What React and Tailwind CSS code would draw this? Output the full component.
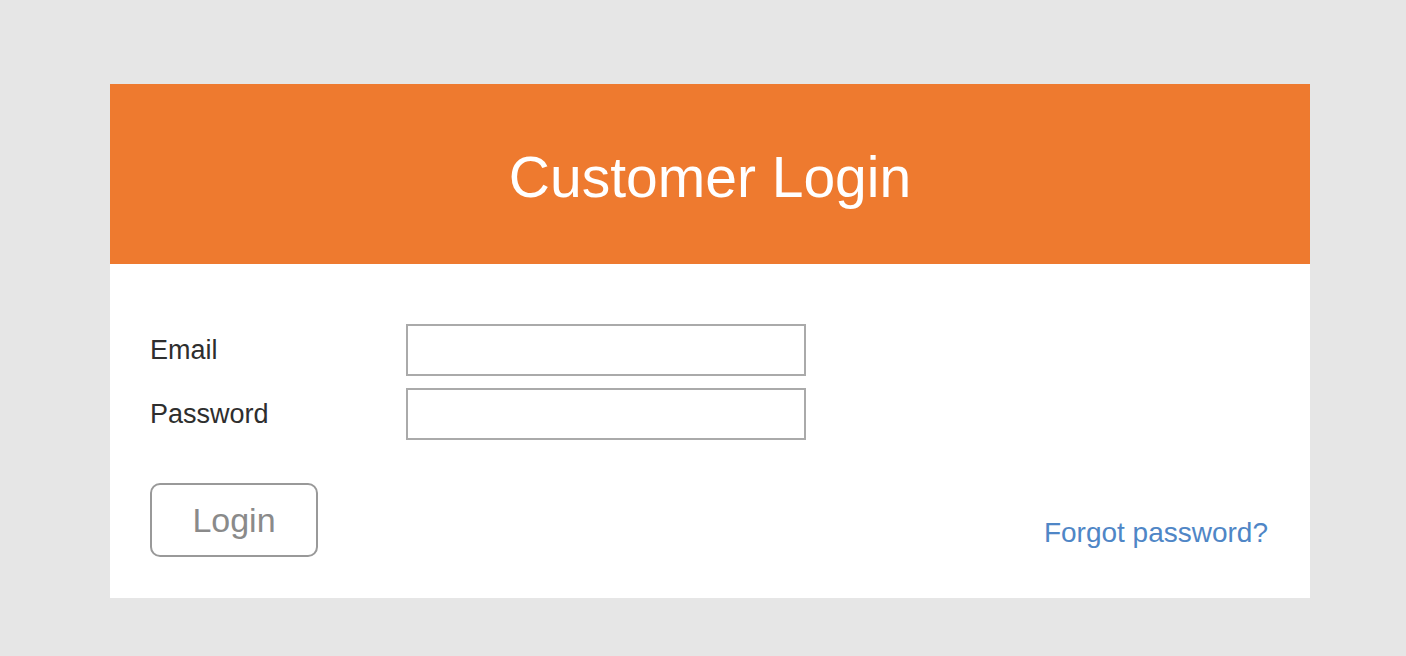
export default function App() {
  const font = { fontFamily: '"Liberation Sans", Arial, Helvetica, sans-serif' };
  return (
    <div className="min-h-[656px] w-full bg-[#e6e6e6] pt-[84px] pl-[110px]" style={font}>
      <div className="w-[1200px] bg-white">
        <div className="flex h-[180px] items-center justify-center bg-[#ee7a2f]">
          <h1 className="text-[57px] leading-none font-normal text-white pt-[6px]">Customer Login</h1>
        </div>
        <div className="px-10 pt-[60px] pb-[41px]">
          <div className="flex flex-col gap-[12px]">
            <div className="flex items-center">
              <label className="w-[256px] text-[27px] leading-none text-[#2e2e2e]">Email</label>
              <input type="text" className="h-[52px] w-[400px] border-2 border-[#aaaaaa] bg-white outline-none" />
            </div>
            <div className="flex items-center">
              <label className="w-[256px] text-[27px] leading-none text-[#2e2e2e]">Password</label>
              <input type="password" className="h-[52px] w-[400px] border-2 border-[#aaaaaa] bg-white outline-none" />
            </div>
          </div>
          <div className="mt-[43px] flex items-end justify-between">
            <button className="flex h-[74px] w-[168px] items-center justify-center rounded-[10px] border-2 border-[#999999] bg-white text-[34px] leading-none text-[#8a8a8a]">
              Login
            </button>
            <a href="#" className="mb-[10px] mr-[2px] text-[28px] leading-none text-[#4f86c6]">Forgot password?</a>
          </div>
        </div>
      </div>
    </div>
  );
}
